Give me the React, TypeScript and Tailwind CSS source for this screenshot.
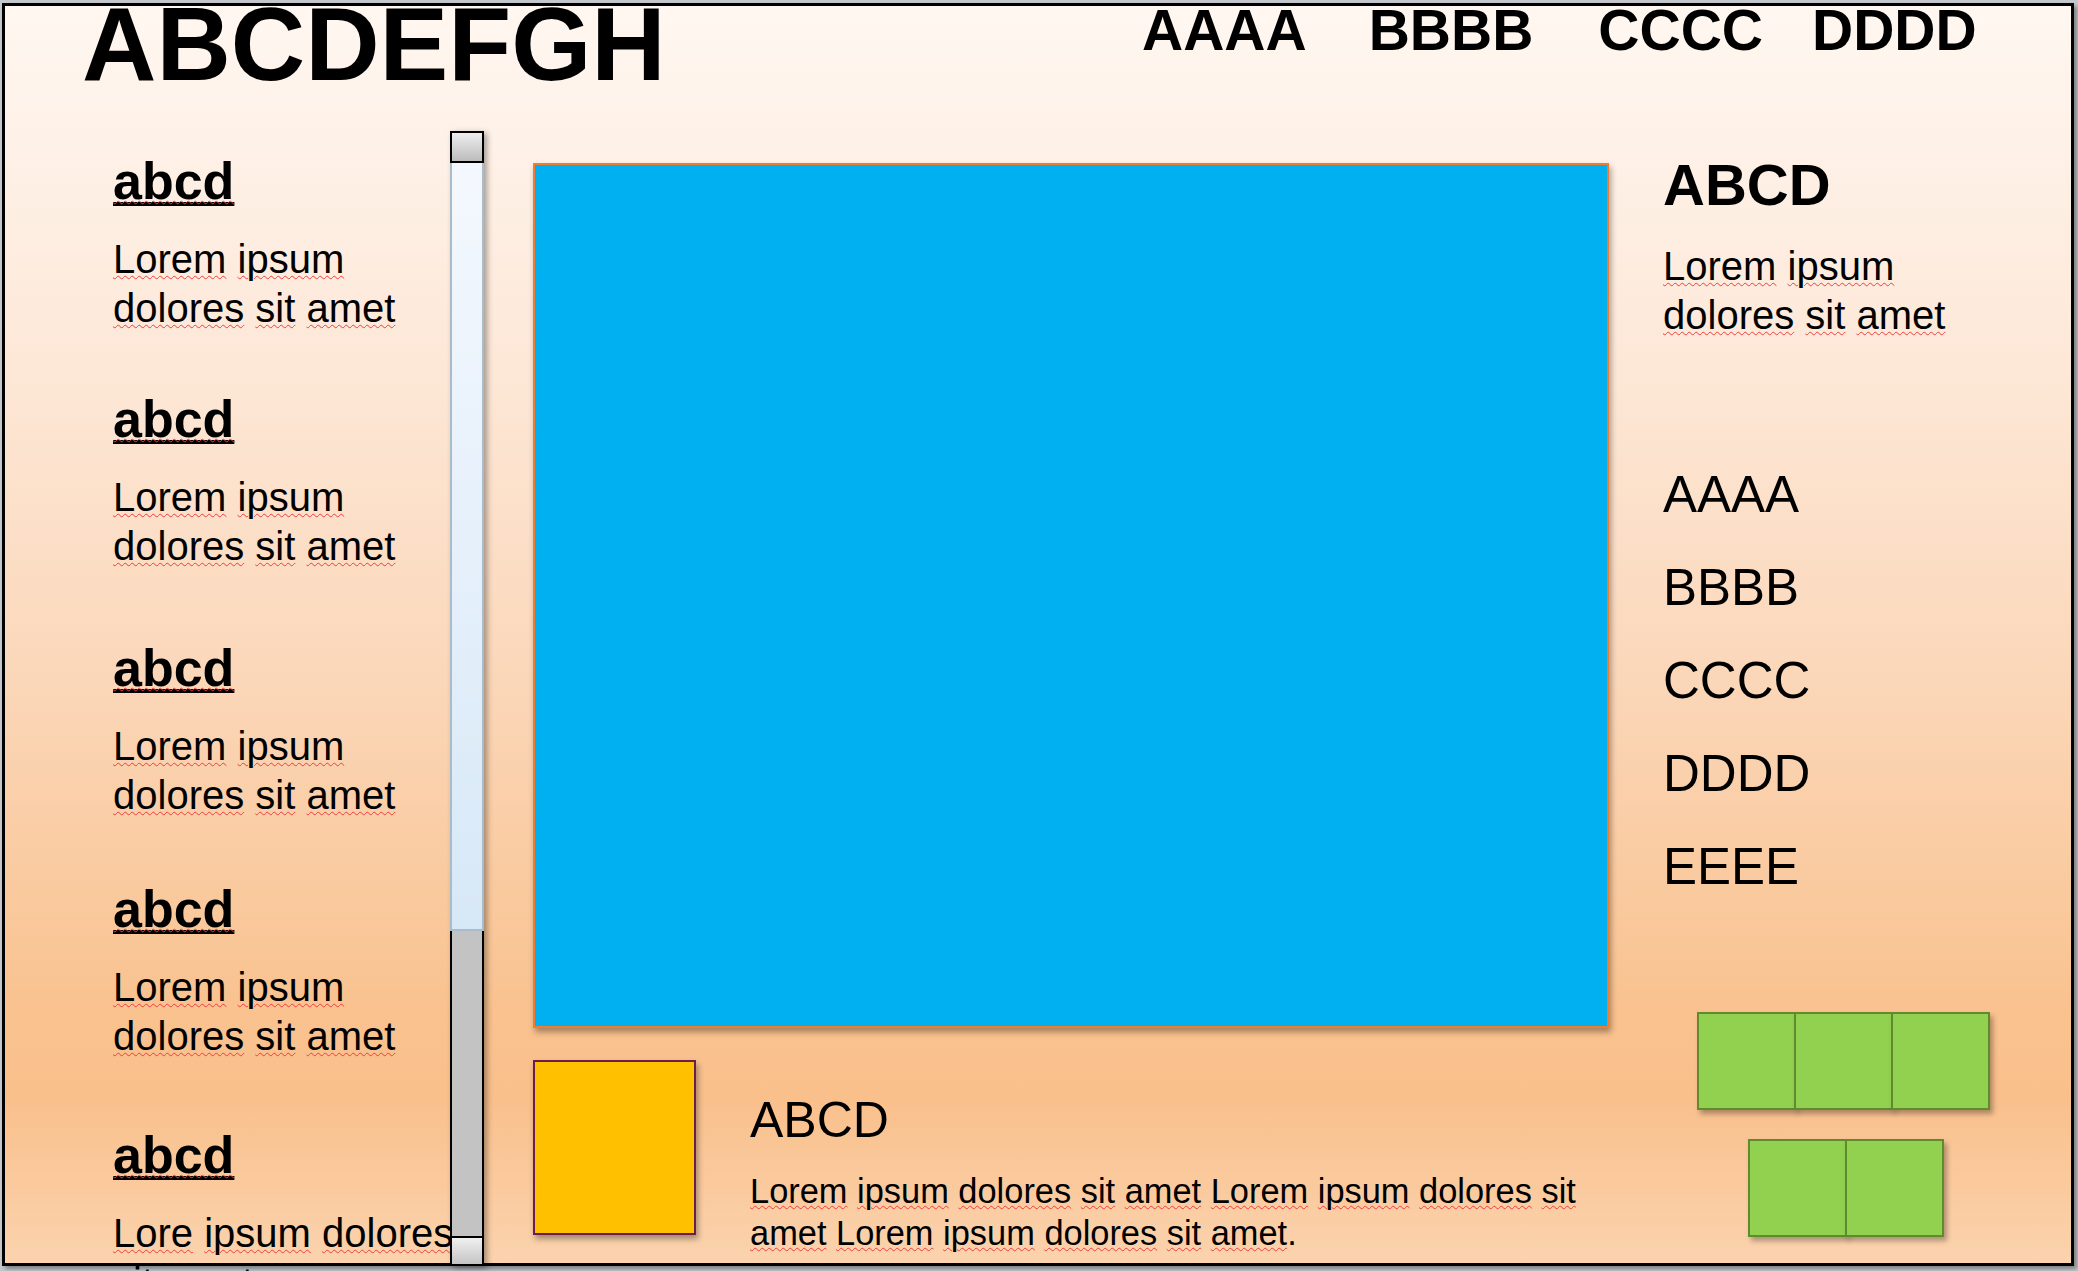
import { Fragment } from "react";

const Squiggly = ({ text }: { text: string }) => (
  <>
    {text.split(" ").map((word, i) => (
      <Fragment key={i}>
        {i > 0 && " "}
        <span className="underline decoration-wavy decoration-[#f03c3c] decoration-1 underline-offset-[2px]">
          {word}
        </span>
      </Fragment>
    ))}
  </>
);

type BlockProps = {
  text: string;
  className?: string;
};

const SideBlock = ({ text, className = "" }: BlockProps) => (
  <div className={className}>
    <div className="text-[52px] font-bold leading-[52px]">
      <span className="underline decoration-black decoration-[4px] underline-offset-[3px]">
        <span className="underline decoration-wavy decoration-[#f03c3c] decoration-1 underline-offset-[1px]">
          abcd
        </span>
      </span>
    </div>
    <p className="mt-[28px] w-[350px] text-[40px] leading-[49px]">
      <Squiggly text={text} />
    </p>
  </div>
);

const GreenSquare = ({ first }: { first?: boolean }) => (
  <div
    className={`h-[98px] w-[99px] border-2 border-[#5f8a2d] bg-[#92d050] shadow-[3px_4px_5px_rgba(0,0,0,0.3)] ${
      first ? "" : "-ml-[2px]"
    }`}
  />
);

const Scrollbar = () => (
  <div className="flex h-[1135px] w-[34px] shrink-0 flex-col shadow-[3px_2px_6px_rgba(0,0,0,0.35)]">
    <div className="h-[32px] border-2 border-black bg-linear-to-b from-[#eeeeee] to-[#bcbcbc]" />
    <div className="h-[768px] border-x-2 border-b-2 border-[#a9bccb] bg-linear-to-b from-[#f4f8fe] to-[#d7e8f7]" />
    <div className="flex-1 border-x-2 border-black bg-[#c3c3c3]" />
    <div className="h-[30px] border-2 border-black bg-linear-to-b from-[#f0f0f0] to-[#c4c4c4]" />
  </div>
);

const App = () => {
  return (
    <div className="h-[1271px] w-full overflow-hidden bg-[#c4c8cc] pl-[2px] pt-[3px] font-['Liberation_Sans',Arial,sans-serif] text-black">
      <div className="flex h-[1263px] w-[2072px] flex-col border-[3px] border-black bg-[linear-gradient(180deg,#fff7f1_0%,#fde8d8_28%,#fbd8bb_52%,#f9c28f_80%,#f9c08c_87%,#fbd3ae_100%)] shadow-[3px_3px_4px_rgba(0,0,0,0.35)]">
        {/* header */}
        <div className="flex h-[125px] shrink-0 items-start">
          <div className="w-[1137px] shrink-0 pl-[77px]">
            <h1 className="-mt-[13px] text-[103px] font-bold leading-[103px]">ABCDEFGH</h1>
          </div>
          <nav className="-mt-[4px] flex text-[57px] font-bold leading-[57px]">
            <span>AAAA</span>
            <span className="ml-[62px]">BBBB</span>
            <span className="ml-[65px]">CCCC</span>
            <span className="ml-[49px]">DDDD</span>
          </nav>
        </div>

        {/* body */}
        <div className="flex flex-1 items-start">
          <div className="w-[445px] shrink-0 pl-[108px] pt-[24px]">
            <SideBlock text="Lorem ipsum dolores sit amet" />
            <SideBlock className="mt-[60px]" text="Lorem ipsum dolores sit amet" />
            <SideBlock className="mt-[71px]" text="Lorem ipsum dolores sit amet" />
            <SideBlock className="mt-[63px]" text="Lorem ipsum dolores sit amet" />
            <SideBlock className="mt-[68px]" text="Lore ipsum dolores sit amet" />
          </div>

          <Scrollbar />

          <div className="ml-[49px] w-[1076px] shrink-0">
            <div className="mt-[32px] h-[865px] w-full border-2 border-[#ed7d31] bg-[#00b0f0] shadow-[2px_4px_6px_rgba(0,0,0,0.35)]" />
            <div className="mt-[32px] flex">
              <div className="h-[175px] w-[163px] shrink-0 border-2 border-[#6d1d4d] bg-[#ffc000] shadow-[2px_4px_6px_rgba(0,0,0,0.35)]" />
              <div className="ml-[54px] pt-[35px]">
                <div className="text-[50px] leading-[50px]">ABCD</div>
                <p className="mt-[25px] w-[870px] text-[34.4px] leading-[42px]">
                  <Squiggly text="Lorem ipsum dolores sit amet Lorem ipsum dolores sit amet Lorem ipsum dolores sit amet" />
                  .
                </p>
              </div>
            </div>
          </div>

          <div className="ml-[54px] flex-1 pt-[25px]">
            <div className="text-[58px] font-bold leading-[58px]">ABCD</div>
            <p className="mt-[28px] w-[330px] text-[40px] leading-[49px]">
              <Squiggly text="Lorem ipsum dolores sit amet" />
            </p>
            <ul className="mt-[108px] text-[51px] leading-[93px]">
              <li>AAAA</li>
              <li>BBBB</li>
              <li>CCCC</li>
              <li>DDDD</li>
              <li>EEEE</li>
            </ul>
            <div className="ml-[34px] mt-[99px] flex">
              <GreenSquare first />
              <GreenSquare />
              <GreenSquare />
            </div>
            <div className="ml-[85px] mt-[29px] flex">
              <GreenSquare first />
              <GreenSquare />
            </div>
          </div>
        </div>
      </div>
    </div>
  );
};

export default App;
